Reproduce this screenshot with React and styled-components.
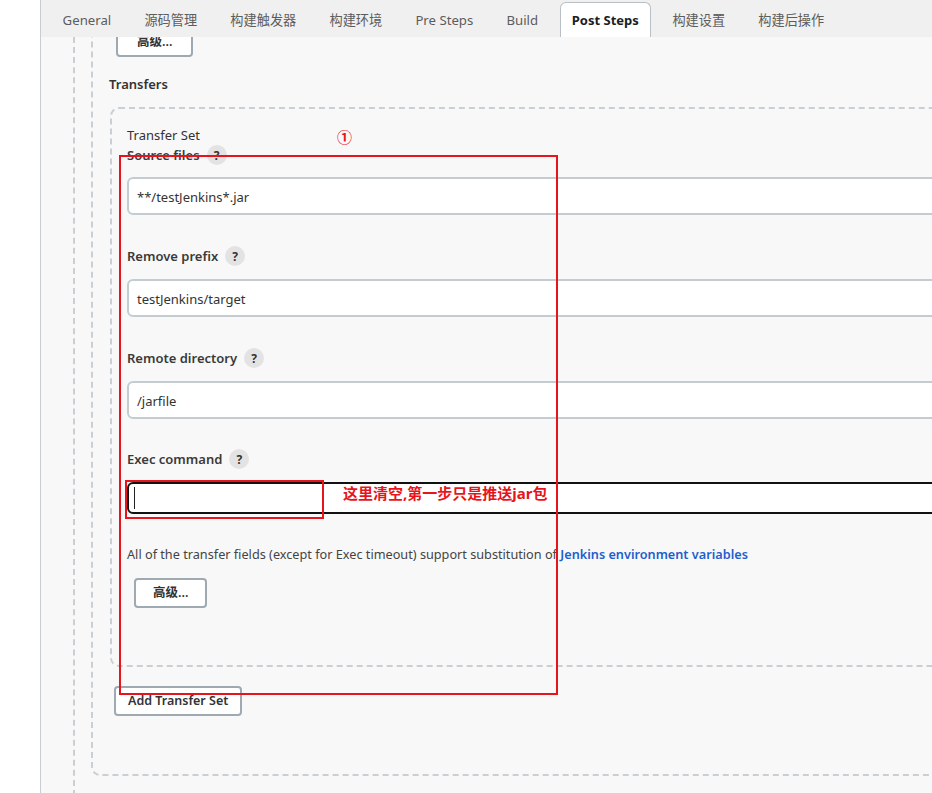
import React from 'react';
import styled, { createGlobalStyle } from 'styled-components';

const GlobalStyle = createGlobalStyle`
  html, body {
    margin: 0;
    padding: 0;
  }
  body {
    font-family: "Noto Sans", "Noto Sans CJK SC", sans-serif;
    font-size: 13px;
    color: #333;
    background: #fff;
  }
`;

const Page = styled.div`
  position: relative;
  display: flex;
  width: 932px;
  height: 793px;
  overflow: hidden;
  background: #fff;
`;

const Gutter = styled.div`
  width: 40px;
  flex: none;
  background: #fff;
  border-right: 1px solid #c7ced3;
`;

const Main = styled.div`
  flex: 1;
  min-width: 0;
  display: flex;
  flex-direction: column;
  background: #f8f8f8;
  overflow: hidden;
`;

const TabBar = styled.div`
  height: 37px;
  flex: none;
  display: flex;
  align-items: flex-end;
  padding-left: 5px;
  background: #f0f0f0;
  position: relative;
  z-index: 2;
`;

const Tab = styled.div`
  box-sizing: border-box;
  height: ${(p) => (p.$active ? '35px' : '37px')};
  display: flex;
  align-items: center;
  padding: ${(p) => (p.$active ? '0 11px' : '2px 16.6px 0')};
  margin: ${(p) => (p.$active ? '0 5px' : '0')};
  font-size: ${(p) => (p.$active ? '13px' : '13.2px')};
  white-space: nowrap;
  color: ${(p) => (p.$active ? '#1d1d1d' : '#5c5c5c')};
  font-weight: ${(p) => (p.$active ? 700 : 400)};
  background: ${(p) => (p.$active ? '#fff' : 'transparent')};
  border: ${(p) => (p.$active ? '1px solid #b8c0c6' : 'none')};
  border-bottom: none;
  border-radius: 6px 6px 0 0;
`;

const Scroll = styled.div`
  flex: 1;
  overflow: hidden;
`;

const Shifted = styled.div`
  margin-top: -10px;
  width: 1000px;
  padding-left: 32px;
`;

const OuterFrame = styled.div`
  border-left: 2px dashed #c9cfd3;
  padding-left: 16px;
  padding-bottom: 40px;
`;

const InnerFrame = styled.div`
  border: 2px dashed #c9cfd3;
  border-top: none;
  border-radius: 0 0 0 9px;
  padding: 0 0 58px 16px;
`;

const Button = styled.button`
  display: block;
  box-sizing: border-box;
  height: 30px;
  margin: ${(p) => p.$margin || '0'};
  padding: 0 ${(p) => p.$pad || '16px'};
  background: #fff;
  border: 2px solid #9ea9b1;
  border-radius: 4px;
  font-family: "Noto Sans", "Noto Sans CJK SC", sans-serif;
  font-size: 12.5px;
  font-weight: 600;
  color: #333;
  line-height: 26px;
`;

const SectionTitle = styled.div`
  margin-top: 17px;
  line-height: 20px;
  font-weight: 600;
  color: #333;
`;

const TransferBox = styled.div`
  margin: 13px 0 0 1px;
  border: 2px dashed #c9cfd3;
  border-radius: 9px;
  padding: 16px 0 57px 15px;
`;

const PlainLine = styled.div`
  line-height: 20px;
  color: #333;
`;

const Label = styled.div`
  display: flex;
  align-items: center;
  height: 20px;
  margin-top: ${(p) => p.$top || '0'};
  font-weight: 600;
  color: #3a3a3a;
`;

const Help = styled.span`
  display: inline-flex;
  align-items: center;
  justify-content: center;
  width: 20px;
  height: 20px;
  margin-left: 7px;
  border-radius: 50%;
  background: #e3e3e3;
  font-size: 12px;
  font-weight: 700;
  color: #333;
`;

const TextBox = styled.div`
  box-sizing: border-box;
  display: flex;
  align-items: center;
  height: ${(p) => (p.$focused ? '32px' : '38px')};
  margin-top: ${(p) => p.$top || '12px'};
  padding: ${(p) => (p.$focused ? '0 0 0 5px' : '1px 0 0 8px')};
  background: #fff;
  border: 2px solid ${(p) => (p.$focused ? '#111' : '#c3cdd1')};
  border-radius: 6px;
  color: #333;
`;

const Caret = styled.span`
  width: 1px;
  height: 22px;
  background: #222;
`;

const Hint = styled.div`
  margin-top: 30px;
  line-height: 20px;
  font-size: 12.7px;
  color: #444;
`;

const Link = styled.a`
  color: #1f5fcc;
  font-weight: 600;
  text-decoration: none;
`;

const MarkBox = styled.div`
  position: absolute;
  box-sizing: border-box;
  border: 2px solid #e8141c;
  pointer-events: none;
`;

const MarkText = styled.div`
  position: absolute;
  color: #e8141c;
  font-size: ${(p) => p.$size || '13px'};
  font-weight: ${(p) => p.$weight || 700};
  white-space: nowrap;
  line-height: 18px;
`;

const tabs = ['General', '源码管理', '构建触发器', '构建环境', 'Pre Steps', 'Build', 'Post Steps', '构建设置', '构建后操作'];

const fields = [
  { label: 'Remove prefix', value: 'testJenkins/target' },
  { label: 'Remote directory', value: '/jarfile' },
];

export default function App() {
  return (
    <>
      <GlobalStyle />
      <Page>
        <Gutter />
        <Main>
          <TabBar>
            {tabs.map((t) => (
              <Tab key={t} $active={t === 'Post Steps'}>{t}</Tab>
            ))}
          </TabBar>
          <Scroll>
            <Shifted>
              <OuterFrame>
                <InnerFrame>
                  <Button $margin="0 0 0 7px" $pad="19px">高级...</Button>
                  <SectionTitle>Transfers</SectionTitle>
                  <TransferBox>
                    <PlainLine>Transfer Set</PlainLine>
                    <Label>Source files<Help>?</Help></Label>
                    <TextBox>**/testJenkins*.jar</TextBox>
                    {fields.map((f) => (
                      <React.Fragment key={f.label}>
                        <Label $top="31px">{f.label}<Help>?</Help></Label>
                        <TextBox $top="13px">{f.value}</TextBox>
                      </React.Fragment>
                    ))}
                    <Label $top="30px">Exec command<Help>?</Help></Label>
                    <TextBox $top="13px" $focused><Caret /></TextBox>
                    <Hint>
                      All of the transfer fields (except for Exec timeout) support substitution of{' '}
                      <Link href="#">Jenkins environment variables</Link>
                    </Hint>
                    <Button $margin="14px 0 0 7px" $pad="17px">高级...</Button>
                  </TransferBox>
                  <Button $margin="19px 0 0 5px" $pad="12px">Add Transfer Set</Button>
                </InnerFrame>
              </OuterFrame>
            </Shifted>
          </Scroll>
        </Main>

        <MarkBox style={{ left: 119, top: 155, width: 439, height: 540 }} />
        <MarkBox style={{ left: 125, top: 480, width: 199, height: 39 }} />
        <MarkText $size="15px" style={{ left: 337, top: 128 }}>①</MarkText>
        <MarkText $size="15px" style={{ left: 343, top: 484 }}>这里清空,第一步只是推送jar包</MarkText>
      </Page>
    </>
  );
}
